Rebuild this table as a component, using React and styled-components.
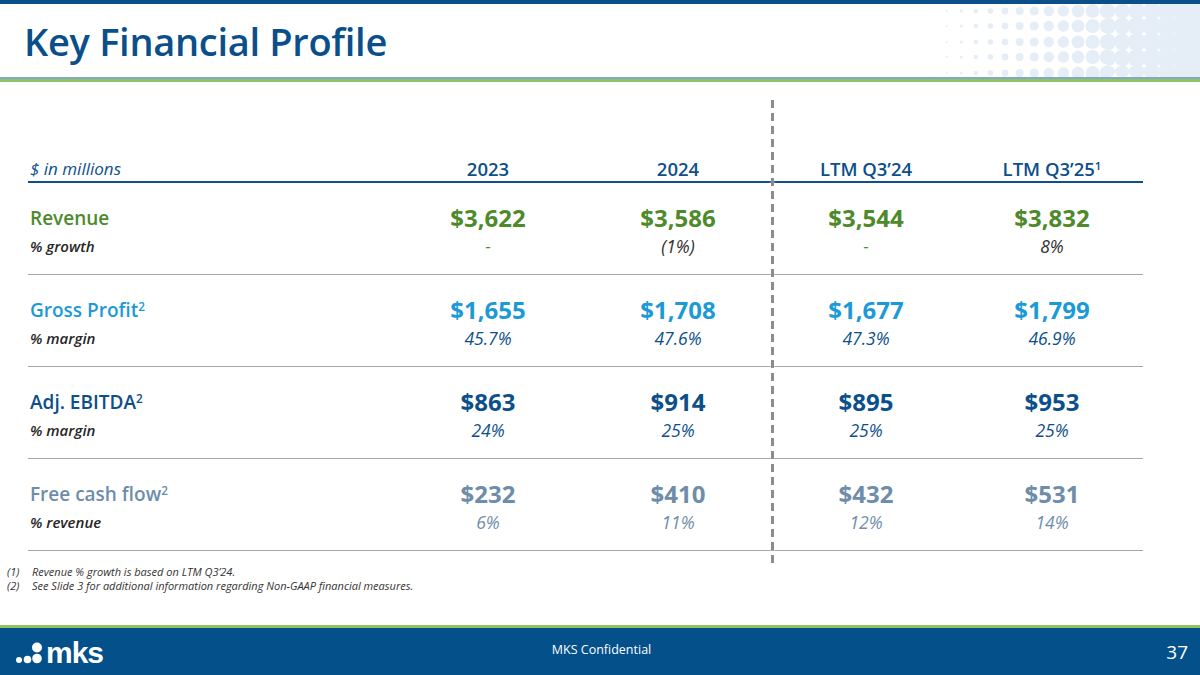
import React from 'react'
import styled, { createGlobalStyle } from 'styled-components'

const GlobalStyle = createGlobalStyle`
  html, body {
    margin: 0;
    padding: 0;
    background: #fff;
  }
  * {
    box-sizing: border-box;
  }
`

const tones = {
  green: '#4e8a2c',
  cyan: '#1c9ad6',
  navy: '#0c4f8a',
  slate: '#6e8daa',
  ink: '#2e2e2e',
}

const Slide = styled.div`
  width: 1200px;
  height: 675px;
  display: flex;
  flex-direction: column;
  overflow: hidden;
  font-family: "Open Sans", "Noto Sans", sans-serif;
  background: #fff;
`

const TopBar = styled.div`
  height: 4px;
  background: #0b4f8a;
`

const Header = styled.header`
  height: 73px;
  display: flex;
  justify-content: space-between;
  align-items: stretch;
`

const Title = styled.h1`
  margin: 0;
  padding: 11px 0 0 24px;
  font-size: 38px;
  font-weight: 600;
  letter-spacing: -0.3px;
  color: #0b4f8a;
`

const HeaderRule = styled.div`
  height: 5px;
  border-top: 2px solid #7fa8cf;
  background: #93c35f;
`

const Main = styled.main`
  flex: 1;
  display: flex;
  flex-direction: column;
  padding-top: 18px;
`

const TableWrap = styled.div`
  position: relative;
  margin: 0 57px 0 28px;
  padding: 55px 0 14px;
`

const Divider = styled.div`
  position: absolute;
  top: 0;
  bottom: 0;
  left: 743px;
  width: 3px;
  background: repeating-linear-gradient(
    to bottom,
    #8c8c8c 0 8px,
    transparent 8px 13px
  );
  box-shadow: 0 0 2px rgba(255, 255, 255, 0.9);
  filter: blur(0.4px);
`

const HeadRow = styled.div`
  display: grid;
  grid-template-columns: 365px 190px 190px 186px 186px;
  align-items: center;
  height: 28px;
  border-bottom: 2px solid #0c4f8a;
  color: #0c4f8a;
`

const Unit = styled.div`
  font-style: italic;
  font-size: 17px;
  padding-left: 2px;
`

const Year = styled.div`
  text-align: center;
  font-size: 18.5px;
  font-weight: 600;
`

const Group = styled.div`
  display: grid;
  grid-template-columns: 365px 190px 190px 186px 186px;
  grid-auto-rows: auto;
  row-gap: 4px;
  padding: 22px 0 17px;
  border-bottom: 1px solid #a6a6a6;
`

const Label = styled.div`
  height: 26px;
  line-height: 26px;
  font-size: 19px;
  font-weight: 600;
  padding-left: 2px;
  color: ${p => tones[p.$tone]};
`

const Value = styled.div`
  height: 26px;
  line-height: 26px;
  text-align: center;
  font-size: 24px;
  font-weight: 700;
  color: ${p => tones[p.$tone]};
`

const SubLabel = styled.div`
  height: 22px;
  line-height: 22px;
  font-size: 15px;
  font-style: italic;
  font-weight: 600;
  padding-left: 2px;
  color: #262626;
`

const SubValue = styled.div`
  height: 22px;
  line-height: 22px;
  text-align: center;
  font-size: 17.5px;
  font-style: italic;
  color: ${p => tones[p.$tone]};
`

const Sup = styled.sup`
  font-size: 0.62em;
  line-height: 0;
  vertical-align: 0.55em;
`

const Notes = styled.ol`
  list-style: none;
  margin: 0;
  padding: 0 0 0 7px;
  font-size: 11px;
  font-style: italic;
  line-height: 14px;
  color: #333;
`

const Note = styled.li`
  display: grid;
  grid-template-columns: 25px 1fr;
`

const Footer = styled.footer`
  height: 50px;
  border-top: 3px solid #92c35e;
  background: #03508a;
  color: #fff;
  display: grid;
  grid-template-columns: 1fr auto 1fr;
  align-items: center;
  padding: 0 12px 0 15px;
`

const Logo = styled.div`
  display: flex;
  align-items: flex-end;
  gap: 1px;
  padding-top: 2px;
`

const LogoWord = styled.span`
  font-family: "Liberation Sans", Arial, sans-serif;
  font-weight: 700;
  font-size: 30px;
  letter-spacing: -1px;
  line-height: 28px;
`

const Confidential = styled.div`
  font-size: 12.5px;
  margin-top: -4px;
`

const PageNum = styled.div`
  justify-self: end;
  font-size: 19px;
`

function DotPattern() {
  const rows = [7, 22, 38, 53, 69]
  const cols = Array.from({ length: 13 }, (_, i) => i)
  const starCols = [215, 229, 244, 259, 274]
  const starSize = [6.5, 5.5, 4, 2.5, 1.2]
  const starRows = [14, 30, 46, 62]
  const star = (cx, cy, s) =>
    `M${cx} ${cy - s} Q${cx} ${cy} ${cx + s} ${cy} Q${cx} ${cy} ${cx} ${cy + s} Q${cx} ${cy} ${cx - s} ${cy} Q${cx} ${cy} ${cx} ${cy - s}Z`
  return (
    <svg width="300" height="73" viewBox="0 0 300 73">
      <rect x="207" y="0" width="93" height="73" fill="#e5edf7" />
      {rows.map(y =>
        cols.map(i => (
          <circle
            key={`${y}-${i}`}
            cx={32 + i * 14.6}
            cy={y}
            r={0.4 + i * 0.6}
            fill="#e5edf7"
          />
        ))
      )}
      {starRows.map(y =>
        starCols.map((x, k) => (
          <path key={`s${y}-${x}`} d={star(x, y, starSize[k])} fill="#fff" />
        ))
      )}
      {[0, 73].map(y =>
        starCols.map((x, k) => (
          <path key={`e${y}-${x}`} d={star(x, y, starSize[k])} fill="#fff" />
        ))
      )}
    </svg>
  )
}

function MksDots() {
  return (
    <svg width="30" height="28" viewBox="0 0 30 28">
      <circle cx="4" cy="21" r="3" fill="#fff" />
      <circle cx="12.5" cy="20.5" r="3.8" fill="#fff" />
      <circle cx="22" cy="8.5" r="5" fill="#fff" />
      <circle cx="22" cy="19.5" r="4.8" fill="#fff" />
    </svg>
  )
}

const groups = [
  {
    label: 'Revenue',
    tone: 'green',
    values: ['$3,622', '$3,586', '$3,544', '$3,832'],
    sub: '% growth',
    subValues: [['-', 'green'], ['(1%)', 'ink'], ['-', 'green'], ['8%', 'ink']],
  },
  {
    label: 'Gross Profit',
    sup: '2',
    tone: 'cyan',
    values: ['$1,655', '$1,708', '$1,677', '$1,799'],
    sub: '% margin',
    subValues: [['45.7%', 'navy'], ['47.6%', 'navy'], ['47.3%', 'navy'], ['46.9%', 'navy']],
  },
  {
    label: 'Adj. EBITDA',
    sup: '2',
    tone: 'navy',
    values: ['$863', '$914', '$895', '$953'],
    sub: '% margin',
    subValues: [['24%', 'navy'], ['25%', 'navy'], ['25%', 'navy'], ['25%', 'navy']],
  },
  {
    label: 'Free cash flow',
    sup: '2',
    tone: 'slate',
    values: ['$232', '$410', '$432', '$531'],
    sub: '% revenue',
    subValues: [['6%', 'slate'], ['11%', 'slate'], ['12%', 'slate'], ['14%', 'slate']],
  },
]

export default function App() {
  return (
    <Slide>
      <GlobalStyle />
      <TopBar />
      <Header>
        <Title>Key Financial Profile</Title>
        <DotPattern />
      </Header>
      <HeaderRule />
      <Main>
        <TableWrap>
          <HeadRow>
            <Unit>$ in millions</Unit>
            <Year>2023</Year>
            <Year>2024</Year>
            <Year>LTM Q3’24</Year>
            <Year>
              LTM Q3’25<Sup>1</Sup>
            </Year>
          </HeadRow>
          {groups.map(g => (
            <Group key={g.label}>
              <Label $tone={g.tone}>
                {g.label}
                {g.sup && <Sup>{g.sup}</Sup>}
              </Label>
              {g.values.map((v, i) => (
                <Value key={i} $tone={g.tone}>
                  {v}
                </Value>
              ))}
              <SubLabel>{g.sub}</SubLabel>
              {g.subValues.map(([v, tone], i) => (
                <SubValue key={i} $tone={tone}>
                  {v}
                </SubValue>
              ))}
            </Group>
          ))}
          <Divider />
        </TableWrap>
        <Notes>
          <Note>
            <span>(1)</span>
            <span>Revenue % growth is based on LTM Q3’24.</span>
          </Note>
          <Note>
            <span>(2)</span>
            <span>See Slide 3 for additional information regarding Non-GAAP financial measures.</span>
          </Note>
        </Notes>
      </Main>
      <Footer>
        <Logo>
          <MksDots />
          <LogoWord>mks</LogoWord>
        </Logo>
        <Confidential>MKS Confidential</Confidential>
        <PageNum>37</PageNum>
      </Footer>
    </Slide>
  )
}
